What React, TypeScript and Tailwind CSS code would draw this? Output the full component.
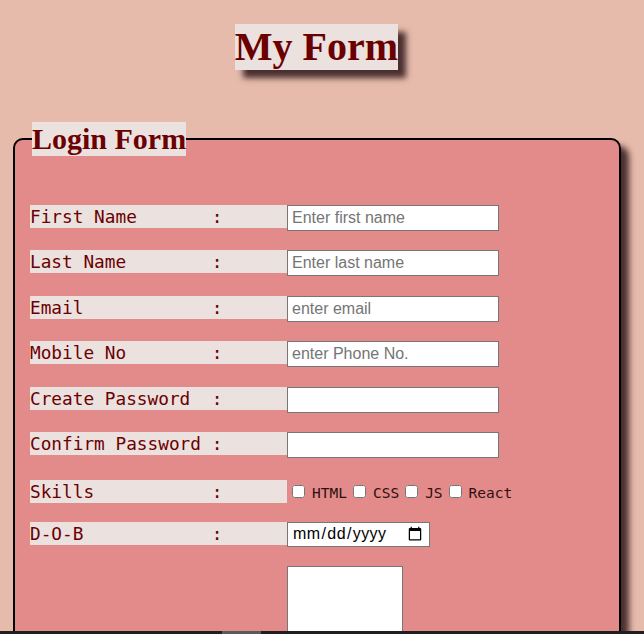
import React from 'react';

const textRows = [
  { label: 'First Name       :', placeholder: 'Enter first name', type: 'text', h: 'h-[45.4px]' },
  { label: 'Last Name        :', placeholder: 'Enter last name', type: 'text', h: 'h-[45.4px]' },
  { label: 'Email            :', placeholder: 'enter email', type: 'email', h: 'h-[45.4px]' },
  { label: 'Mobile No        :', placeholder: 'enter Phone No.', type: 'tel', h: 'h-[45.4px]' },
  { label: 'Create Password  :', placeholder: '', type: 'password', h: 'h-[45.4px]' },
  { label: 'Confirm Password :', placeholder: '', type: 'password', h: 'h-[48px]' },
];

const skills = ['HTML', 'CSS', 'JS', 'React'];

function Label({ text }: { text: string }) {
  return (
    <label className="w-[257px] h-[23px] leading-[25px] bg-[#ebe1df] text-[#6b0000] text-[17.75px] whitespace-pre font-['DejaVu_Sans_Mono',monospace] shrink-0 overflow-hidden">
      {text}
    </label>
  );
}

export default function App() {
  return (
    <div className="min-h-[634px] bg-[#e6bbac] pt-[24px] overflow-hidden font-['Liberation_Sans',Arial,sans-serif]">
      {/* Title */}
      <div className="flex justify-center pr-[11px]">
        <h1 className="bg-[#ebe1df] text-[#6b0000] text-[40px] leading-[46px] font-bold font-['Liberation_Serif',serif] shadow-[8px_8px_6px_#4a2f2f]">
          My Form
        </h1>
      </div>

      {/* Form */}
      <fieldset className="mt-[52px] ml-[13px] w-[608px] border-2 border-black rounded-[10px] bg-[#e38a8a] px-[15px] pb-[40px] shadow-[8px_8px_6px_#4a2f2f]">
        <legend className="ml-[2px] bg-[#ebe1df] text-[#6b0000] text-[30px] leading-[34px] font-bold font-['Liberation_Serif',serif]">
          Login Form
        </legend>

        <div className="pt-[49px] flex flex-col">
          {textRows.map((row) => (
            <div key={row.label} className={`flex items-start ${row.h}`}>
              <Label text={row.label} />
              <input
                type={row.type}
                placeholder={row.placeholder}
                className="w-[212px] h-[26px] bg-white border border-[#767676] px-[4px] text-[16px] text-black placeholder:text-[#757575] outline-none"
              />
            </div>
          ))}

          {/* Skills */}
          <div className="flex items-start h-[42px]">
            <Label text="Skills           :" />
            <div className="flex items-center h-[23px] pt-[1px]">
              {skills.map((s, i) => (
                <span key={s} className="flex items-center">
                  <input
                    type="checkbox"
                    className={`w-[13px] h-[13px] ${i === 0 ? 'ml-[5px]' : 'ml-[6px]'} mr-[7px]`}
                  />
                  <span className="text-[14.5px] text-[#2e1010] font-['DejaVu_Sans_Mono',monospace] pt-[4px]">
                    {s}
                  </span>
                </span>
              ))}
            </div>
          </div>

          {/* DOB */}
          <div className="flex items-start h-[44px]">
            <Label text="D-O-B            :" />
            <input
              type="date"
              className="w-[143px] h-[25px] bg-white border border-[#767676] px-[4px] text-[16px] tracking-[0.4px] text-black"
            />
          </div>

          {/* Textarea */}
          <div className="flex items-start">
            <div className="w-[257px] shrink-0" />
            <textarea className="w-[116px] h-[100px] bg-white border border-[#767676] resize-none" />
          </div>
        </div>
      </fieldset>

      <div className="fixed bottom-0 left-0 right-0 h-[3px] bg-[#1f1f1f]">
        <div className="ml-[222px] w-[39px] h-full bg-[#5a5a5a]" />
      </div>
    </div>
  );
}
